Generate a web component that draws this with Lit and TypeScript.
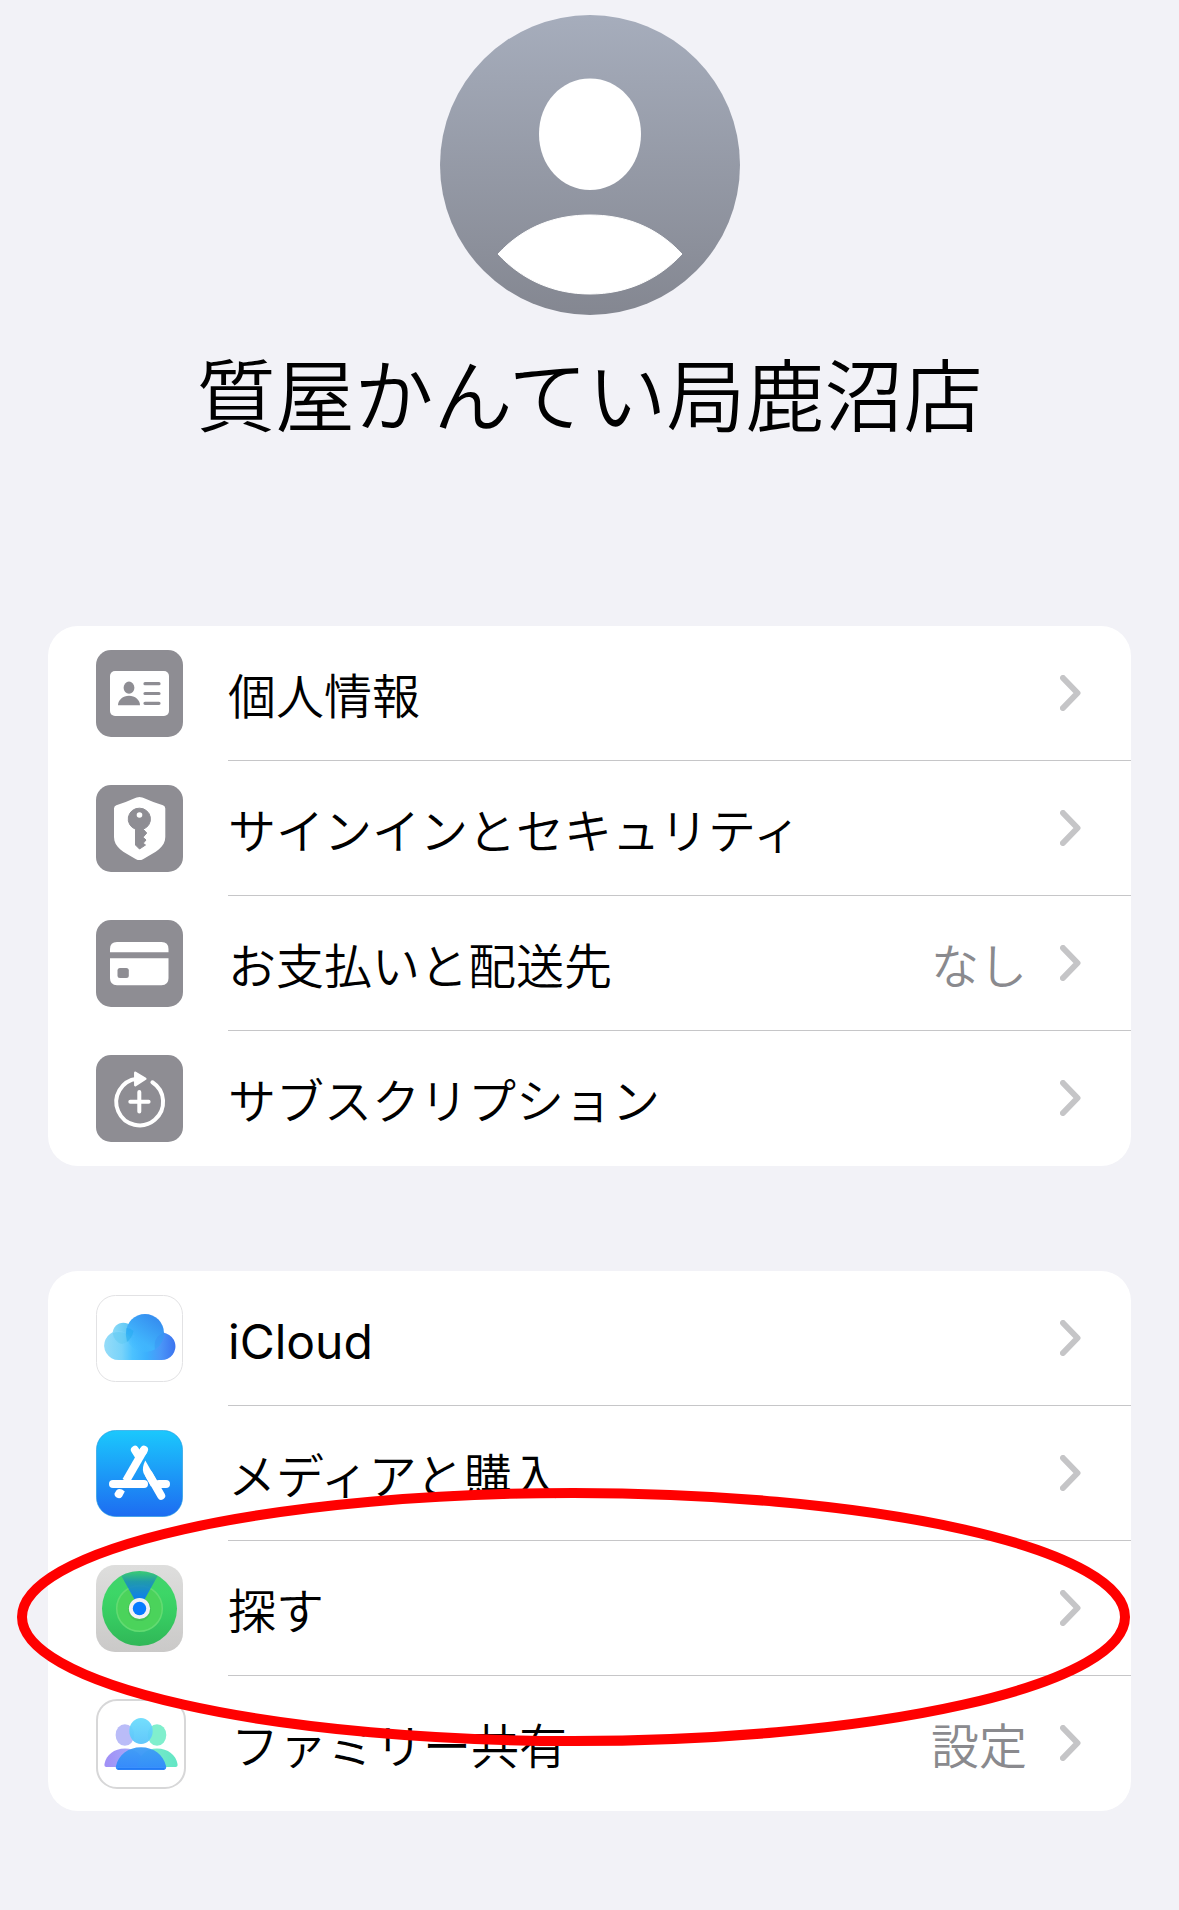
import { LitElement, html, svg, css, nothing, type TemplateResult } from "lit";
import { customElement, property } from "lit/decorators.js";

type IconName =
  | "id" | "shield" | "card" | "subscription"
  | "icloud" | "appstore" | "findmy" | "family";

interface Entry {
  icon: IconName;
  label: string;
  value?: string;
}

const ACCOUNT: Entry[] = [
  { icon: "id", label: "個人情報" },
  { icon: "shield", label: "サインインとセキュリティ" },
  { icon: "card", label: "お支払いと配送先", value: "なし" },
  { icon: "subscription", label: "サブスクリプション" },
];

const SERVICES: Entry[] = [
  { icon: "icloud", label: "iCloud" },
  { icon: "appstore", label: "メディアと購入" },
  { icon: "findmy", label: "探す" },
  { icon: "family", label: "ファミリー共有", value: "設定" },
];

const GRAY = "#8e8d93";
const tile = svg`<rect width="87" height="87" rx="15" fill=${GRAY} />`;

const ICONS: Record<IconName, TemplateResult> = {
  id: html`<svg width="87" height="87" viewBox="0 0 87 87" aria-hidden="true">
    ${tile}
    <rect x="14" y="21" width="59" height="45" rx="5" fill="#fff" />
    <g fill="#8e8d93">
      <ellipse cx="33" cy="37.7" rx="5.4" ry="6.1" />
      <path d="M22 55.3C22 50 27 45.8 33 45.8S44 50 44 55.3Z" />
    </g>
    <path d="M49 33.7H63M49 43.5H63M49 53.3H63" stroke="#8e8d93" stroke-width="3.2" stroke-linecap="round" />
  </svg>`,
  shield: html`<svg width="87" height="87" viewBox="0 0 87 87" aria-hidden="true">
    ${tile}
    <path d="M43.5 12C46.5 12 52 15.500 67 20.300Q69.300 21 69.300 23.500V52C69.300 62 60 67 47 74.200Q43.500 76 40 74.200C27 67 18 62 18 52V23.500Q18 21 20.300 20.300C35 15.500 40.500 12 43.500 12Z" fill="#fff" />
    <path d="M43.500 23.200A10.800 10.800 0 0 1 47.200 44.200L50.700 48L47 52.300L50 55L47.200 58.300L49.500 60L43.500 64L39.500 60V44.200A10.800 10.800 0 0 1 43.500 23.200Z" fill="#8e8d93" stroke="#8e8d93" stroke-linejoin="round" />
    <circle cx="43.500" cy="30" r="2.800" fill="#fff" />
  </svg>`,
  card: html`<svg width="87" height="87" viewBox="0 0 87 87" aria-hidden="true">
    ${tile}
    <path d="M14 32.300V29Q14 22 21 22H65.500Q72.500 22 72.500 29V32.300ZM14 38.200H72.500V58.300Q72.500 65.200 65.500 65.200H21Q14 65.200 14 58.300Z" fill="#fff" />
    <rect x="21.500" y="48" width="11.300" height="10" rx="2.500" fill="#8e8d93" />
  </svg>`,
  subscription: html`<svg width="87" height="87" viewBox="0 0 87 87" aria-hidden="true">
    ${tile}
    <g fill="none" stroke="#fff" stroke-width="4" stroke-linecap="round">
      <path d="M56.400 27.300A23.400 23.400 0 1 1 41 23.700" />
      <path d="M43.300 37V56.500M34.300 46.700H52.600" />
    </g>
    <path d="M39.300 17.700L49.300 23.800L39.300 30.200Z" fill="#fff" stroke="#fff" stroke-width="2.500" stroke-linejoin="round" />
  </svg>`,
  icloud: html`<svg width="87" height="87" viewBox="0 0 87 87" aria-hidden="true">
    <defs>
      <linearGradient id="cloud-body" gradientUnits="userSpaceOnUse" x1="8" y1="50" x2="79" y2="50">
        <stop offset="0" stop-color="#96dcf8" /><stop offset=".25" stop-color="#78d3fa" />
        <stop offset=".4" stop-color="#4cc2ff" /><stop offset=".6" stop-color="#3cb0fd" />
        <stop offset=".8" stop-color="#4a96f8" /><stop offset="1" stop-color="#3c74ef" />
      </linearGradient>
      <linearGradient id="cloud-top" gradientUnits="userSpaceOnUse" x1="36" y1="56" x2="60" y2="24">
        <stop offset="0" stop-color="#42bcff" stop-opacity="0" /><stop offset=".35" stop-color="#40b4fc" />
        <stop offset="1" stop-color="#368ff0" />
      </linearGradient>
      <linearGradient id="cloud-small" x1="0" y1="0" x2="1" y2="0">
        <stop offset="0" stop-color="#8bdaf7" /><stop offset="1" stop-color="#4fc0f4" />
      </linearGradient>
    </defs>
    <rect x=".5" y=".5" width="86" height="86" rx="19" fill="#fff" stroke="#e2e2e4" />
    <circle cx="27.300" cy="38.300" r="10.600" fill="url(#cloud-small)" />
    <path d="M22.500 65A14.500 14.500 0 1 1 34 41.500L58 40A13.700 13.700 0 1 1 65.400 65Z" fill="url(#cloud-body)" />
    <circle cx="49" cy="38" r="19" fill="url(#cloud-top)" />
    <path d="M16.800 38.300A14.500 14.500 0 0 1 34.800 43Q31 48 26 49Q18 47 16.800 38.300Z" fill="#5cc8ef" opacity=".45" />
    <path d="M30.500 33A10.600 10.600 0 0 1 37.500 36Q36 43 31 47Q29 40 30.500 33Z" fill="#22aaf0" opacity=".5" />
    <path d="M68 37.900A19 19 0 0 1 59 54.200Q57 41 68 37.900Z" fill="#3a8cf2" opacity=".4" />
  </svg>`,
  appstore: html`<svg width="87" height="87" viewBox="0 0 87 87" aria-hidden="true">
    <defs>
      <linearGradient id="store" x1="0" y1="0" x2="0" y2="1">
        <stop offset="0" stop-color="#1bc8fd" /><stop offset="1" stop-color="#1d6cf1" />
      </linearGradient>
    </defs>
    <rect x=".5" y=".5" width="86" height="86" rx="19" fill="url(#store)" stroke="#1898e0" stroke-opacity=".6" />
    <g fill="none" stroke="#fff" stroke-width="8" stroke-linecap="round" stroke-linejoin="round">
      <path d="M38.900 19.800L43 26.500" />
      <path d="M48 19.800L30 51" stroke-linecap="butt" />
      <path d="M48 19.800L47 21.500" />
      <path d="M17 54H48" />
      <path d="M63 54H70" />
      <path d="M53 44.500L65.200 65.700" />
    </g>
    <path d="M49.300 30.500L61 51L55 56.500L47.500 43Q45.500 38 49.300 30.500Z" fill="#fff" />
    <path d="M20.500 60.200Q24 57.500 28.800 61.500L26 66.700A4.300 4.300 0 0 1 18.500 63.600Z" fill="#fff" />
  </svg>`,
  findmy: html`<svg width="87" height="87" viewBox="0 0 87 87" aria-hidden="true">
    <defs>
      <linearGradient id="find-tile" x1="0" y1="0" x2="0" y2="1">
        <stop offset="0" stop-color="#dededd" /><stop offset="1" stop-color="#cac9c8" />
      </linearGradient>
      <linearGradient id="find-disc" x1="0" y1="0" x2="0" y2="1">
        <stop offset="0" stop-color="#40d36d" /><stop offset=".3" stop-color="#3dd667" />
        <stop offset=".6" stop-color="#37cc62" /><stop offset="1" stop-color="#30b757" />
      </linearGradient>
      <linearGradient id="find-beam" gradientUnits="userSpaceOnUse" x1="0" y1="6" x2="0" y2="36">
        <stop offset="0" stop-color="#1d9ca0" stop-opacity=".15" /><stop offset=".35" stop-color="#1b90b8" stop-opacity=".85" />
        <stop offset="1" stop-color="#0a7af8" />
      </linearGradient>
    </defs>
    <rect width="87" height="87" rx="19" fill="url(#find-tile)" />
    <circle cx="43.500" cy="43.500" r="37.500" fill="url(#find-disc)" />
    <circle cx="43.500" cy="43.500" r="22.800" fill="#4bd35b" stroke="#63db72" stroke-width="1.500" />
    <path d="M43.500 43.500L25.300 10.700A37.500 37.500 0 0 1 61.700 10.700Z" fill="url(#find-beam)" />
    <circle cx="43.500" cy="44.500" r="11.500" fill="#1c7a3a" opacity=".18" />
    <circle cx="43.500" cy="43.500" r="10.600" fill="#f1f1f5" />
    <circle cx="43.500" cy="43.500" r="6.700" fill="#067bff" />
  </svg>`,
  family: html`<svg width="90" height="90" viewBox="0 0 90 90" aria-hidden="true">
    <defs>
      <linearGradient id="fam-l" x1="0" y1="0" x2="1" y2="0">
        <stop offset="0" stop-color="#a08ff6" /><stop offset="1" stop-color="#a9b4fb" />
      </linearGradient>
      <linearGradient id="fam-r" x1="0" y1="0" x2="1" y2="0">
        <stop offset="0" stop-color="#82eccf" /><stop offset="1" stop-color="#62e6c4" />
      </linearGradient>
      <linearGradient id="fam-m" x1="0" y1="0" x2="0" y2="1">
        <stop offset="0" stop-color="#3d9df5" /><stop offset="1" stop-color="#2f88fc" />
      </linearGradient>
      <linearGradient id="fam-h" x1="0" y1="0" x2="0" y2="1">
        <stop offset="0" stop-color="#6bdcfc" /><stop offset="1" stop-color="#58c4fb" />
      </linearGradient>
    </defs>
    <rect x="1" y="1" width="88" height="88" rx="20" fill="#fff" stroke="#d7d7d8" stroke-width="2" />
    <ellipse cx="28.900" cy="36" rx="9.300" ry="10.800" fill="#babcf8" />
    <ellipse cx="61" cy="36" rx="9.300" ry="10.800" fill="#80efcd" />
    <path d="M10.500 68Q8 68 8.500 65C10 56 18 49.500 29 49.500S47 56 49 68Z" fill="url(#fam-l)" />
    <path d="M79.500 68Q82 68 81.500 65C80 56 72 49.500 61 49.500S43 56 41 68Z" fill="url(#fam-r)" />
    <ellipse cx="45" cy="32" rx="11.700" ry="13" fill="url(#fam-h)" fill-opacity=".94" />
    <path d="M22.500 70.700Q19 70.700 20 67C22.500 56 32 48.200 45 48.200S67.500 56 70 67Q71 70.700 67.500 70.700Z" fill="url(#fam-m)" fill-opacity=".95" />
    <path d="M21.500 70H68.500" stroke="#1a74f5" stroke-width="1.300" />
  </svg>`,
};

@customElement("settings-row")
class SettingsRow extends LitElement {
  @property({ attribute: false }) entry!: Entry;
  @property({ type: Boolean }) last = false;

  static styles = css`
    :host { display: block; }
    .row {
      display: flex;
      align-items: center;
      gap: 45px;
      min-height: 135px;
      padding-left: 48px;
      color: #000;
      text-decoration: none;
    }
    .icon { display: flex; flex: none; }
    .content {
      flex: 1;
      display: flex;
      align-items: center;
      align-self: stretch;
      box-sizing: border-box;
      padding: 8px 50px 0 0;
      border-bottom: 1px solid #c6c6c8;
    }
    .content.last { border-bottom-color: transparent; }
    .label, .value { font-size: 48px; line-height: 64px; }
    .label { flex: 1; }
    .label.latin { font-weight: 400; }
    .value { color: #8a8a8e; margin-right: 33px; }
    .chevron { flex: none; margin-bottom: 8px; }
  `;

  render() {
    const { icon, label, value } = this.entry;
    const latin = /^[a-z]+$/i.test(label);
    return html`<a class="row" href="#${icon}">
      <span class="icon">${ICONS[icon]}</span>
      <span class="content ${this.last ? "last" : ""}">
        <span class="label ${latin ? "latin" : ""}">${label}</span>
        ${value ? html`<span class="value">${value}</span>` : nothing}
        <svg class="chevron" width="21" height="36" viewBox="0 0 21 36" aria-hidden="true">
          <path d="M3 3L17.500 18L3 33" fill="none" stroke="#c5c5c7" stroke-width="6" stroke-linecap="round" stroke-linejoin="round" />
        </svg>
      </span>
    </a>`;
  }
}

@customElement("app-root")
class AppRoot extends LitElement {
  static styles = css`
    :host {
      display: block;
      min-height: 100vh;
      box-sizing: border-box;
      padding: 15px 48px 96px;
      background: #f2f2f7;
      color: #000;
      font-family: Inter, "Noto Sans CJK JP", sans-serif;
      font-weight: 350;
    }
    .profile {
      display: flex;
      flex-direction: column;
      align-items: center;
      gap: 24px;
      margin-bottom: 171px;
    }
    .avatar { display: block; }
    .name {
      margin: 0;
      font-size: 79px;
      line-height: 116px;
      font-weight: 350;
      text-align: center;
    }
    .groups { display: flex; flex-direction: column; gap: 105px; }
    .group {
      position: relative;
      border-radius: 30px;
      background: #fff;
    }
    .mark {
      position: absolute;
      left: -31px;
      top: 217px;
      width: calc(100% + 30px);
      height: 258px;
      pointer-events: none;
    }
    .mark ellipse {
      rx: calc(50% - 5px);
      ry: calc(50% - 5px);
      fill: none;
      stroke: #f00;
      stroke-width: 10px;
    }
  `;

  private rows(entries: Entry[]) {
    return entries.map(
      (entry, i) =>
        html`<settings-row .entry=${entry} ?last=${i === entries.length - 1}></settings-row>`,
    );
  }

  render() {
    return html`
      <header class="profile">
        <svg class="avatar" width="300" height="300" viewBox="0 0 300 300" aria-hidden="true">
          <defs>
            <linearGradient id="face" x1="0" y1="0" x2="0" y2="1">
              <stop offset="0" stop-color="#a6adbc" />
              <stop offset="1" stop-color="#848791" />
            </linearGradient>
          </defs>
          <circle cx="150" cy="150" r="150" fill="url(#face)" />
          <path d="M150 63.500C179 63.500 201 88 201 119C201 151 178 175 150 175S99 151 99 119C99 88 121 63.500 150 63.500Z" fill="#fff" />
          <path d="M58 239C84 211 116 200 150 200S216 211 242 239C218 265 186 279 150 279S82 265 58 239Z" fill="#fff" stroke="#fff" stroke-linejoin="round" />
        </svg>
        <h1 class="name">質屋かんてい局鹿沼店</h1>
      </header>
      <main class="groups">
        <nav class="group">${this.rows(ACCOUNT)}</nav>
        <nav class="group">
          ${this.rows(SERVICES)}
          <svg class="mark" aria-hidden="true"><ellipse cx="50%" cy="50%" /></svg>
        </nav>
      </main>
    `;
  }
}
